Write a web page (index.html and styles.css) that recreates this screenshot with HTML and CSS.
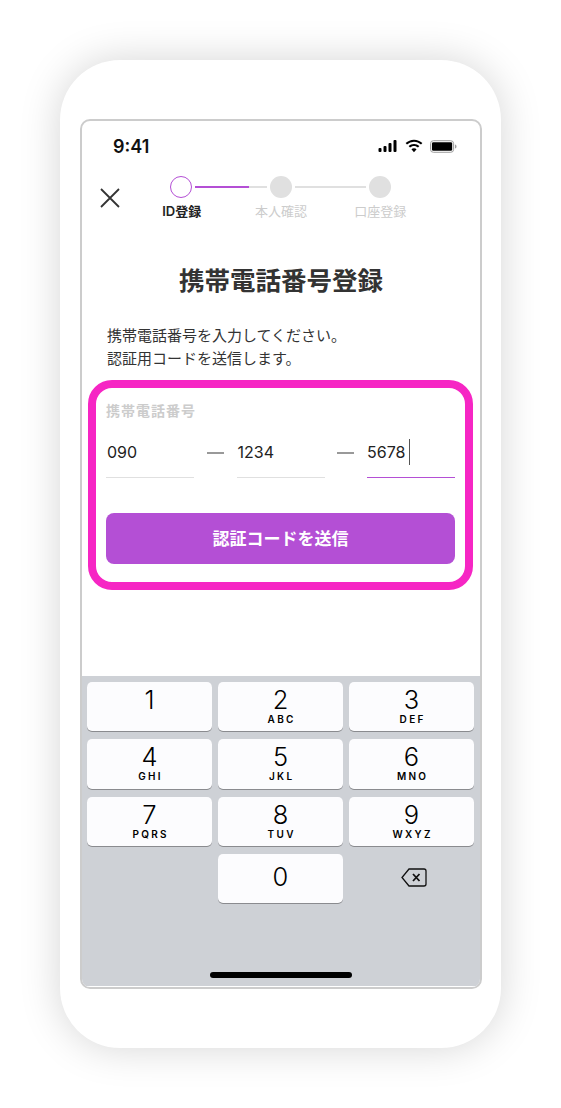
FILE: index.html
```html
<!DOCTYPE html>
<html lang="ja">
<head>
<meta charset="utf-8">
<title>携帯電話番号登録</title>
<link rel="stylesheet" href="styles.css">
</head>
<body>
<div class="phone">
  <div class="screen">
    <div class="status">
      <span class="time">9:41</span>
      <div class="status-icons">
        <svg class="ic-signal" viewBox="0 0 18 12"><rect x="0" y="8" width="3" height="4" rx="1"/><rect x="5" y="6" width="3" height="6" rx="1"/><rect x="10" y="3" width="3" height="9" rx="1"/><rect x="15" y="0" width="3" height="12" rx="1"/></svg>
        <svg class="ic-wifi" viewBox="0 0 18 13"><path d="M9 2.600c2.500 0 4.800 1 6.500 2.600l1.300-1.400A11.300 11.300 0 0 0 9 .6 11.300 11.300 0 0 0 1.200 3.800l1.300 1.400A9.400 9.400 0 0 1 9 2.600z"/><path d="M9 6.500c1.400 0 2.700.5 3.700 1.500l1.300-1.400A7.200 7.200 0 0 0 9 4.600c-1.900 0-3.700.7-5 2l1.300 1.400c1-1 2.300-1.500 3.700-1.500z"/><path d="M9 8.500c-1 0-1.800.4-2.400 1L9 12.200l2.400-2.700c-.6-.6-1.400-1-2.400-1z"/></svg>
        <svg class="ic-batt" viewBox="0 0 28 13"><rect x=".5" y=".5" width="24" height="12" rx="3" fill="none" stroke="#999"/><rect x="2" y="2" width="21" height="9" rx="1.500"/><path d="M26 4.500c.9.300 1.500 1 1.500 2s-.6 1.700-1.500 2z" fill="#999"/></svg>
      </div>
    </div>

    <div class="nav">
      <svg class="ic-close" viewBox="0 0 20 20"><path d="M1 1l18 18M19 1L1 19"/></svg>
      <div class="stepper">
        <div class="track">
          <span class="dot dot-active"></span>
          <span class="line"><span class="line-fill"></span></span>
          <span class="dot"></span>
          <span class="line"></span>
          <span class="dot"></span>
        </div>
        <div class="step-labels">
          <span class="step-label step-label-on">ID登録</span>
          <span class="step-label">本人確認</span>
          <span class="step-label">口座登録</span>
        </div>
      </div>
    </div>

    <h1 class="title">携帯電話番号登録</h1>
    <p class="lead">携帯電話番号を入力してください。<br>認証用コードを送信します。</p>

    <div class="highlight">
      <div class="field-label">携帯電話番号</div>
      <div class="fields">
        <div class="field">090</div>
        <span class="dash"></span>
        <div class="field">1234</div>
        <span class="dash"></span>
        <div class="field field-focus">5678<span class="caret"></span></div>
      </div>
      <div class="send">認証コードを送信</div>
    </div>

    <div class="keyboard">
      <div class="keys">
        <div class="key"><span class="num">1</span></div>
        <div class="key"><span class="num">2</span><span class="abc">ABC</span></div>
        <div class="key"><span class="num">3</span><span class="abc">DEF</span></div>
        <div class="key"><span class="num">4</span><span class="abc">GHI</span></div>
        <div class="key"><span class="num">5</span><span class="abc">JKL</span></div>
        <div class="key"><span class="num">6</span><span class="abc">MNO</span></div>
        <div class="key"><span class="num">7</span><span class="abc">PQRS</span></div>
        <div class="key"><span class="num">8</span><span class="abc">TUV</span></div>
        <div class="key"><span class="num">9</span><span class="abc">WXYZ</span></div>
        <div class="key-empty"></div>
        <div class="key key-zero"><span class="num">0</span></div>
        <div class="key-empty key-del">
          <svg class="ic-del" viewBox="0 0 26 19"><path d="M8 1h15a2 2 0 0 1 2 2v13a2 2 0 0 1-2 2H8L1 9.500z"/><path class="x" d="M12 6l6.500 7M18.500 6L12 13"/></svg>
        </div>
      </div>
      <div class="home-bar"></div>
    </div>
  </div>
</div>
</body>
</html>
```

FILE: styles.css
```css
* { box-sizing: border-box; }
html, body { margin: 0; padding: 0; background: #fff; }
body {
  width: 561px;
  height: 1108px;
  overflow: hidden;
  padding: 60px 60px 0;
  font-family: Inter, "Noto Sans CJK JP", sans-serif;
  color: #222;
}
.phone {
  width: 441px;
  height: 988px;
  padding: 59px 19px 0 20px;
  background: #fff;
  border-radius: 60px;
  box-shadow: 0 0 40px rgba(0, 0, 0, 0.17);
}
.screen {
  width: 402px;
  height: 870px;
  border: 2px solid #ccc;
  border-radius: 10px;
  overflow: hidden;
  display: flex;
  flex-direction: column;
  background: #fff;
}
.status {
  height: 50px;
  flex: none;
  display: flex;
  align-items: center;
  justify-content: space-between;
  padding: 0 23px 0 31px;
}
.time { font-size: 18px; font-weight: 600; color: #111; }
.status-icons { display: flex; align-items: center; gap: 6px; }
.ic-signal { width: 21px; height: 12px; fill: #000; }
.ic-wifi { width: 20px; height: 14px; fill: #000; }
.ic-batt { width: 27px; height: 13px; fill: #000; }
.nav {
  flex: none;
  height: 54px;
  display: flex;
  padding-left: 18px;
}
.ic-close { width: 20px; height: 20px; margin-top: 17px; fill: none; stroke: #333; stroke-width: 1.800; flex: none; }
.stepper { margin-left: 10px; width: 300px; }
.track { display: flex; align-items: center; width: 221px; margin-left: 40px; margin-top: 5px; }
.dot { flex: none; width: 22px; height: 22px; border-radius: 50%; background: #e0e0e0; }
.dot-active { background: #fff; border: 1.500px solid #b44fd5; }
.line { flex: 1; height: 2px; margin: 0 3px; background: #e0e0e0; }
.line-fill { display: block; width: 54px; height: 2px; background: #b44fd5; }
.step-labels { display: flex; margin: 5px 0 0 2px; }
.step-label { width: 99.500px; text-align: center; font-size: 13px; line-height: 17px; color: #ccc; }
.step-label-on { color: #222; font-weight: 600; }
.title {
  margin: 38px 0 0;
  text-align: center;
  font-size: 25.500px;
  line-height: 36px;
  font-weight: 700;
  color: #333;
}
.lead {
  margin: 25px 0 0;
  padding-left: 25px;
  font-size: 15px;
  line-height: 23px;
  color: #333;
}
.highlight {
  width: 385px;
  height: 210px;
  margin: 10px 0 0 6px;
  padding: 13px 10px 0 10px;
  border: 8px solid #f626c4;
  border-radius: 24px;
  flex: none;
}
.field-label { font-size: 14px; font-weight: 700; color: #ccc; line-height: 20px; letter-spacing: 1px; }
.fields { display: flex; align-items: center; margin-top: 13px; }
.field {
  width: 88px;
  height: 44px;
  border-bottom: 1px solid #e0e0e0;
  font-size: 16px;
  line-height: 26px;
  padding-top: 5px;
  padding-left: 1px;
  color: #222;
  display: flex;
  align-items: flex-start;
}
.field-focus { border-bottom-color: #b44fd5; padding-left: 0; }
.caret { width: 1px; height: 26px; background: #555; margin: 0 0 0 4px; }
.dash { width: 17px; height: 1.500px; background: #999; margin: 0 12.750px; transform: translateY(-3px); }
.send {
  height: 51px;
  margin-top: 35px;
  padding-bottom: 2px;
  width: 349px;
  border-radius: 8px;
  background: #b44fd5;
  color: #fff;
  font-size: 17px;
  font-weight: 700;
  display: flex;
  align-items: center;
  justify-content: center;
}
.keyboard {
  flex: 1;
  margin-top: 86px;
  background: #ced1d6;
  padding: 6px 6px 0 5px;
  display: flex;
  flex-direction: column;
  border-bottom: 1px solid #fff;
}
.keys {
  display: grid;
  grid-template-columns: repeat(3, 125px);
  grid-auto-rows: 49.300px;
  column-gap: 6px;
  row-gap: 8px;
}
.key {
  background: #fcfcfe;
  border-radius: 5px;
  box-shadow: 0 1px 0 #8a8b8f;
  display: flex;
  flex-direction: column;
  align-items: center;
  padding-top: 4px;
  color: #000;
}
.key-zero { padding-top: 9px; }
.num { font-size: 25.500px; line-height: 28px; font-weight: 300; }
.abc { font-size: 10px; line-height: 11px; font-weight: 600; letter-spacing: 2.300px; margin-right: -2.300px; }
.key-del { display: flex; justify-content: center; padding: 14px 0 0 5px; }
.ic-del { width: 26px; height: 19px; fill: none; stroke: #111; stroke-width: 1.300; }
.ic-del .x { stroke-width: 1.800; }
.home-bar { width: 142px; height: 6px; background: #000; border-radius: 3px; margin: 69px 0 0 123px; }
```
